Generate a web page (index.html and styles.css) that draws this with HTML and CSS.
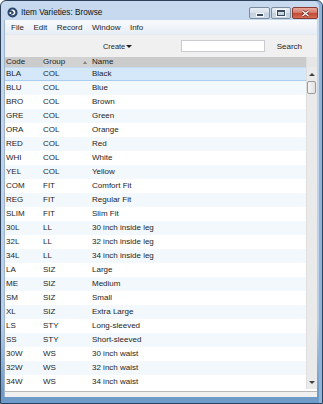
FILE: index.html
```html
<!DOCTYPE html>
<html lang="en">
  <head>
    <meta charset="UTF-8" />
    <title>Item Varieties: Browse</title>
    <link rel="stylesheet" href="styles.css">
  </head>
  <body>
    <div class="window">
      <div class="titlebar">
        <svg class="app-icon" width="11" height="11" viewBox="0 0 11 11">
          <circle cx="5.5" cy="5.5" r="5" fill="#2b466c" />
          <path d="M3 3.2 C5.5 1.8 8.6 3 8.4 5.6 C8.2 8 5.6 9 3.6 7.8 C5.4 8 7 6.9 6.7 5.3 C6.4 3.8 4.6 3.2 3 3.2 Z" fill="#ffffff" />
          <circle cx="3.4" cy="6" r="1" fill="#ffffff" />
        </svg>
        <span class="title">Item Varieties: Browse</span>
        <div class="controls">
          <div class="ctl ctl-min"><span class="glyph-min"></span></div>
          <div class="ctl ctl-max"><span class="glyph-max"></span></div>
          <div class="ctl ctl-close">
            <svg width="9" height="7" viewBox="0 0 9 7">
              <path d="M1.5 1 L7.5 6 M7.5 1 L1.5 6" stroke="#6b2318" stroke-width="2.6" />
              <path d="M1.5 1 L7.5 6 M7.5 1 L1.5 6" stroke="#ffffff" stroke-width="1.4" />
            </svg>
          </div>
        </div>
      </div>

      <div class="client">
        <ul class="menubar">
          <li>File</li>
          <li>Edit</li>
          <li>Record</li>
          <li>Window</li>
          <li>Info</li>
        </ul>

        <div class="toolbar">
          <span class="create">Create<span class="caret"></span></span>
          <input class="search-input" type="text" />
          <span class="search-label">Search</span>
        </div>

        <div class="grid">
          <div class="list">
            <div class="row head">
              <span class="c-code">Code</span>
              <span class="c-group sorted">Group<span class="sort-arrow"></span></span>
              <span class="c-name">Name</span>
            </div>
            <div class="row selected"><span class="c-code">BLA</span><span class="c-group">COL</span><span class="c-name">Black</span></div>
            <div class="row"><span class="c-code">BLU</span><span class="c-group">COL</span><span class="c-name">Blue</span></div>
            <div class="row"><span class="c-code">BRO</span><span class="c-group">COL</span><span class="c-name">Brown</span></div>
            <div class="row"><span class="c-code">GRE</span><span class="c-group">COL</span><span class="c-name">Green</span></div>
            <div class="row"><span class="c-code">ORA</span><span class="c-group">COL</span><span class="c-name">Orange</span></div>
            <div class="row"><span class="c-code">RED</span><span class="c-group">COL</span><span class="c-name">Red</span></div>
            <div class="row"><span class="c-code">WHI</span><span class="c-group">COL</span><span class="c-name">White</span></div>
            <div class="row"><span class="c-code">YEL</span><span class="c-group">COL</span><span class="c-name">Yellow</span></div>
            <div class="row"><span class="c-code">COM</span><span class="c-group">FIT</span><span class="c-name">Comfort Fit</span></div>
            <div class="row"><span class="c-code">REG</span><span class="c-group">FIT</span><span class="c-name">Regular Fit</span></div>
            <div class="row"><span class="c-code">SLIM</span><span class="c-group">FIT</span><span class="c-name">Slim Fit</span></div>
            <div class="row"><span class="c-code">30L</span><span class="c-group">LL</span><span class="c-name">30 inch inside leg</span></div>
            <div class="row"><span class="c-code">32L</span><span class="c-group">LL</span><span class="c-name">32 inch inside leg</span></div>
            <div class="row"><span class="c-code">34L</span><span class="c-group">LL</span><span class="c-name">34 inch inside leg</span></div>
            <div class="row"><span class="c-code">LA</span><span class="c-group">SIZ</span><span class="c-name">Large</span></div>
            <div class="row"><span class="c-code">ME</span><span class="c-group">SIZ</span><span class="c-name">Medium</span></div>
            <div class="row"><span class="c-code">SM</span><span class="c-group">SIZ</span><span class="c-name">Small</span></div>
            <div class="row"><span class="c-code">XL</span><span class="c-group">SIZ</span><span class="c-name">Extra Large</span></div>
            <div class="row"><span class="c-code">LS</span><span class="c-group">STY</span><span class="c-name">Long-sleeved</span></div>
            <div class="row"><span class="c-code">SS</span><span class="c-group">STY</span><span class="c-name">Short-sleeved</span></div>
            <div class="row"><span class="c-code">30W</span><span class="c-group">WS</span><span class="c-name">30 inch waist</span></div>
            <div class="row"><span class="c-code">32W</span><span class="c-group">WS</span><span class="c-name">32 inch waist</span></div>
            <div class="row"><span class="c-code">34W</span><span class="c-group">WS</span><span class="c-name">34 inch waist</span></div>
          </div>
          <div class="scrollbar">
            <div class="sb-top"></div>
            <div class="sb-btn"><span class="arrow-up"></span></div>
            <div class="sb-thumb"></div>
            <div class="sb-track"></div>
            <div class="sb-btn"><span class="arrow-down"></span></div>
          </div>
        </div>
        <div class="grid-foot"></div>
        <div class="statusbar"></div>
      </div>
    </div>
  </body>
</html>
```
FILE: styles.css
```css
body {
  margin: 0;
  font-family: "Liberation Sans", Arial, sans-serif;
  font-size: 8px;
  color: #1e1e1e;
  background-color: #ffffff;
}

.window {
  width: 323px;
  height: 404px;
  box-sizing: border-box;
  border: 1px solid #2d425a;
  border-radius: 6px 6px 0 0;
  background: linear-gradient(#c6d9ee, #b7cfea 80%, #6f9bc9 97%);
  padding: 0 5px 6px 3px;
  display: flex;
  flex-direction: column;
  box-shadow: inset -3px 0 0 #8fb3da;
}

/* title bar */
.titlebar {
  height: 19px;
  display: flex;
  align-items: center;
  padding-top: 3px;
  box-sizing: border-box;
}

.app-icon {
  margin-left: 3px;
  flex-shrink: 0;
}

.title {
  margin-left: 3px;
  font-size: 8.2px;
  color: #111;
}

.controls {
  margin-left: auto;
  margin-right: -1px;
  display: flex;
  gap: 1px;
  align-self: flex-start;
  margin-top: 3px;
}

.ctl {
  height: 10px;
  border: 1px solid #7b8ba0;
  border-radius: 2px;
  background: linear-gradient(#e9eef5, #d4dde8 50%, #c3cfdd 51%, #cfdae6);
  display: flex;
  align-items: center;
  justify-content: center;
}

.ctl-min { width: 19px; }
.ctl-max { width: 18px; }

.ctl-close {
  width: 24px;
  border-color: #8a3a2f;
  background: linear-gradient(#e6a99d, #d47564 50%, #c24a36 51%, #d56a52);
}

.glyph-min {
  width: 6px;
  height: 2px;
  margin-top: 4px;
  background-color: #3a4b60;
  border: 1px solid #f4f7fb;
}

.glyph-max {
  width: 6px;
  height: 3px;
  border: 1px solid #3a4b60;
  border-top-width: 2px;
  box-shadow: 0 0 0 1px #f4f7fb;
}

/* client area */
.client {
  flex: 1;
  display: flex;
  flex-direction: column;
  background-color: #f0f0f0;
  border-left: 1px solid #9fb5ce;
}

.menubar {
  list-style: none;
  margin: 0;
  padding: 0 0 0 6px;
  height: 15px;
  display: flex;
  align-items: center;
  gap: 9.5px;
  background: linear-gradient(#f8fafd, #e8eef6);
  border-bottom: 1px solid #e4e9f0;
  box-sizing: border-box;
}

.toolbar {
  height: 22px;
  display: flex;
  align-items: center;
  padding: 0 15px 0 98px;
  background-color: #f0f0f0;
}

.create {
  display: flex;
  align-items: center;
  font-size: 7.4px;
}

.caret {
  margin-left: 1px;
  border-left: 3px solid transparent;
  border-right: 3px solid transparent;
  border-top: 3px solid #1e1e1e;
}

.search-input {
  margin-left: auto;
  width: 84px;
  height: 12px;
  box-sizing: border-box;
  border: 1px solid #c9cbd0;
  background-color: #ffffff;
  padding: 0;
}

.search-label {
  margin-left: 12px;
}

/* list */
.grid {
  display: flex;
  height: 332px;
}

.list {
  flex: 1;
  background-color: #ffffff;
}

.row {
  display: flex;
  height: 14px;
  line-height: 14px;
  box-sizing: border-box;
}

.row:nth-child(odd) {
  background-color: #f3f8fd;
}

.row.head {
  height: 10px;
  line-height: 10px;
  background-color: #cbcbcb;
}

.row.head .sorted {
  background-color: #d2d2d2;
}

.row.selected {
  background-color: #d4e8fa;
  border-top: 1px solid #c3dcf4;
  border-bottom: 1px solid #a9cdef;
  line-height: 12px;
}

.c-code {
  width: 37px;
  padding-left: 1px;
}

.c-group {
  width: 49px;
  display: flex;
  align-items: center;
}

.c-name {
  flex: 1;
}

.sort-arrow {
  margin-left: auto;
  margin-right: 5px;
  border-left: 2.5px solid transparent;
  border-right: 2.5px solid transparent;
  border-bottom: 3px solid #808080;
}

.scrollbar {
  width: 11px;
  display: flex;
  flex-direction: column;
  background-color: #eaeaea;
  border-left: 1px solid #dedede;
  box-sizing: border-box;
}

.sb-top {
  height: 10px;
  background-color: #e6e6e6;
}

.sb-btn {
  height: 14px;
  display: flex;
  align-items: center;
  justify-content: center;
}

.arrow-up {
  border-left: 3px solid transparent;
  border-right: 3px solid transparent;
  border-bottom: 3px solid #404040;
}

.arrow-down {
  border-left: 3px solid transparent;
  border-right: 3px solid transparent;
  border-top: 3px solid #404040;
}

.sb-thumb {
  height: 13px;
  margin: 0 1px 0 0;
  border: 1px solid #9a9a9a;
  border-radius: 2px;
  background: linear-gradient(90deg, #f6f6f6, #e2e2e2);
  box-sizing: border-box;
}

.sb-track {
  flex: 1;
}

.grid-foot {
  height: 2px;
  background-color: #ffffff;
  border-bottom: 1px solid #b8b8b8;
}

.statusbar {
  flex: 1;
  background-color: #f0f0f0;
}
```
